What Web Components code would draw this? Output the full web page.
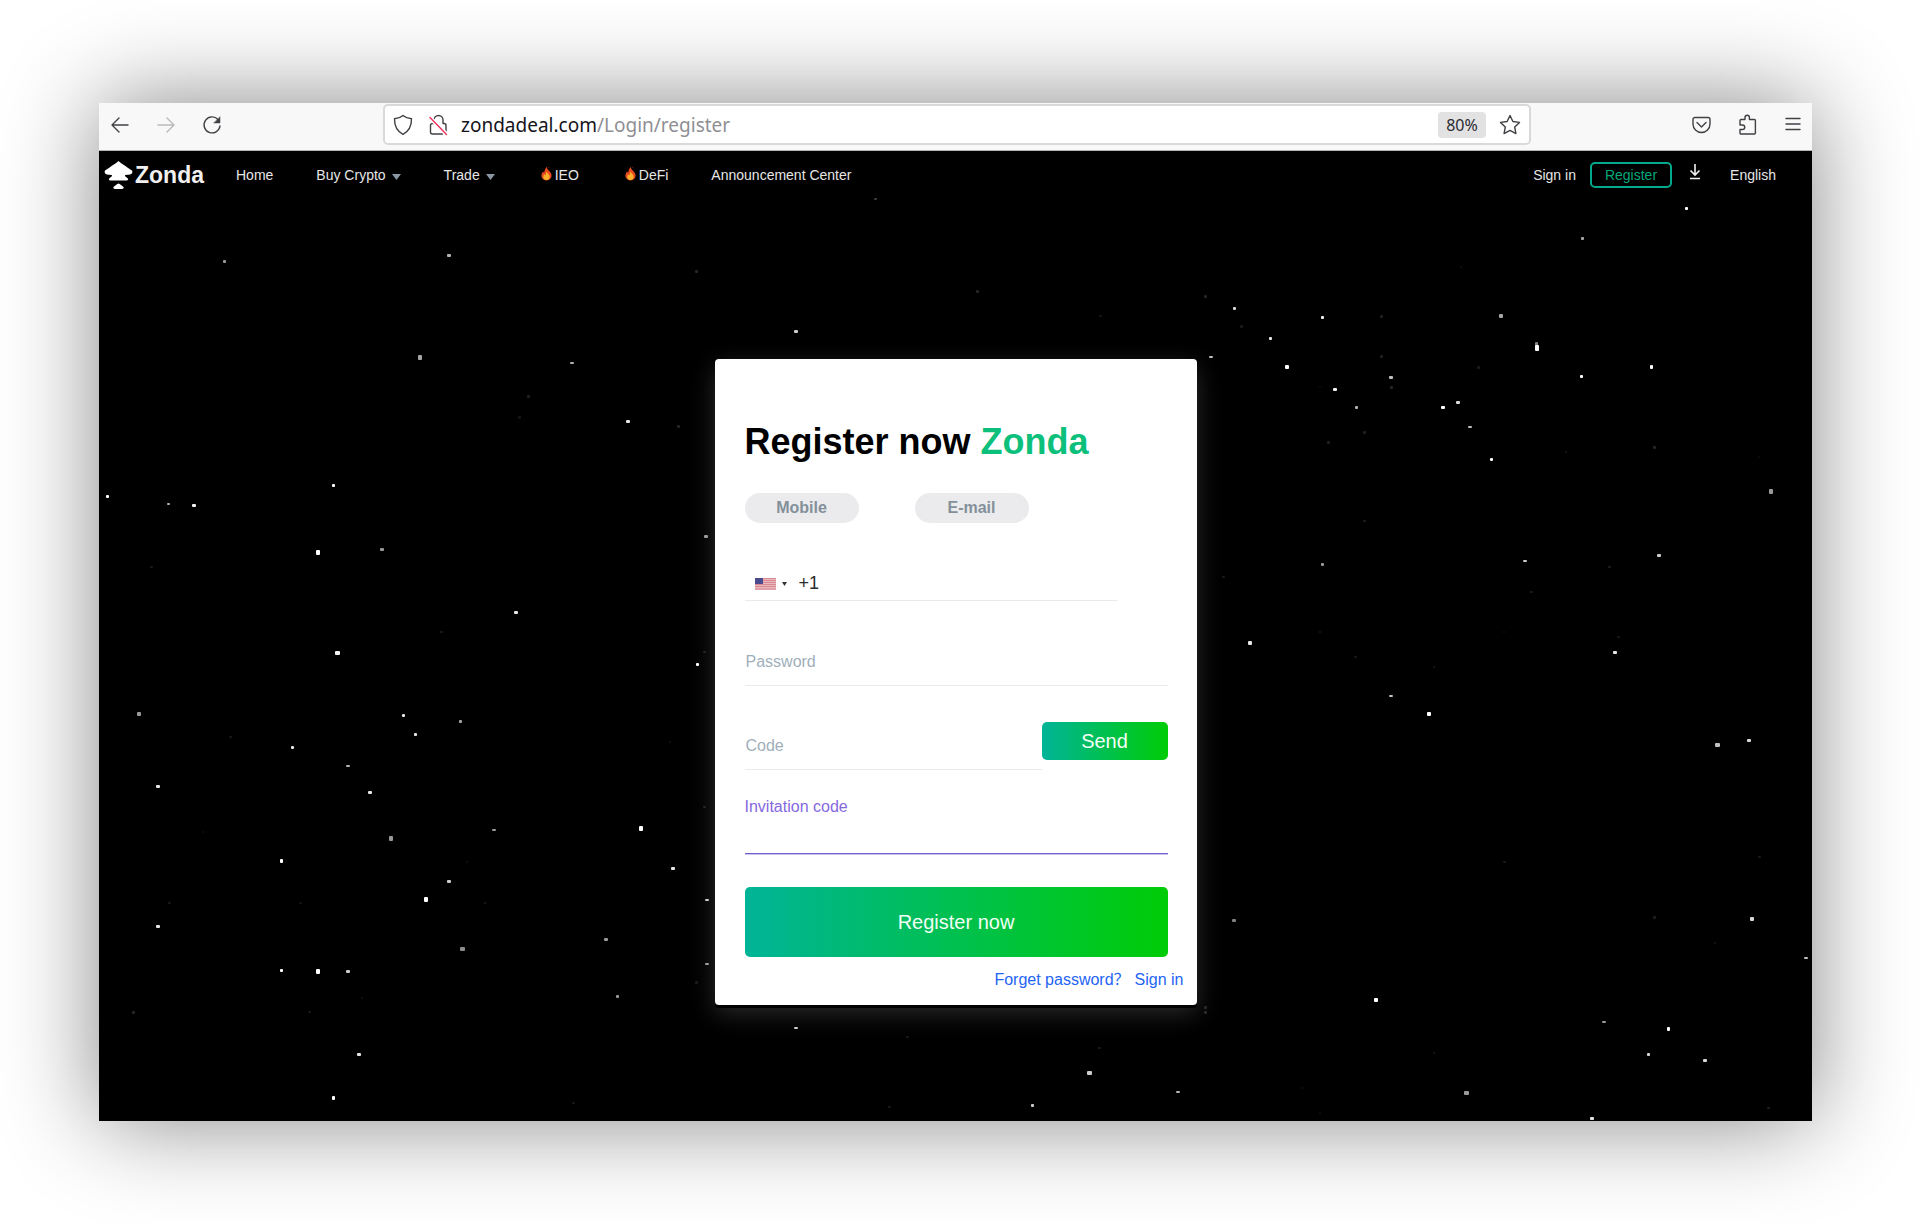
<!DOCTYPE html>
<html lang="en">
<head>
<meta charset="utf-8">
<meta name="viewport" content="width=device-width, initial-scale=1">
<title>Register now - Zonda</title>
<style>
    html, body {
        margin: 0;
        background: #fff;
    }

    body {
        box-sizing: border-box;
        min-height: 100vh;
        padding: 103px 112px 103px 99px;
        display: flex;
        font-family: "Liberation Sans", Arial, sans-serif;
        overflow-x: hidden;
    }
</style>
</head>
<body>

<browser-window>
    <browser-toolbar slot="toolbar" host="zondadeal.com" path="/Login/register" zoom="80%"></browser-toolbar>
    <site-nav></site-nav>
    <register-card></register-card>
</browser-window>

<template id="browser-window-template">
    <style>
        :host {
            flex: 1;
            min-width: 0;
            display: flex;
            flex-direction: column;
            box-shadow: 0 0 90px rgba(0,0,0,0.48);
        }

        .page {
            position: relative;
            flex: 1;
            display: flex;
            flex-direction: column;
            background: #000;
        }

        star-field {
            position: absolute;
            inset: 0;
        }
    </style>
    <slot name="toolbar"></slot>
    <main class="page">
        <star-field></star-field>
        <slot></slot>
    </main>
</template>

<template id="browser-toolbar-template">
    <style>
        :host {
            display: block;
            background: #f8f8f8;
            border-bottom: 1px solid #b4b4b4;
            font-family: "Noto Sans", "Open Sans", sans-serif;
        }

        .bar {
            display: flex;
            align-items: center;
            height: 43px;
            padding-bottom: 4px;
        }

        .group {
            display: flex;
            align-items: center;
            box-sizing: border-box;
        }

        .left {
            width: 284px;
            padding-left: 10px;
            gap: 24px;
        }

        .right {
            width: 281px;
            justify-content: flex-end;
            padding-right: 8px;
            gap: 24px;
        }

        button {
            display: flex;
            align-items: center;
            justify-content: center;
            border: none;
            background: none;
            padding: 0;
            width: 22px;
            height: 22px;
            color: #404045;
        }

        button:disabled {
            color: #b9b9b9;
        }

        svg {
            width: 22px;
            height: 22px;
            fill: none;
            stroke: currentColor;
            stroke-width: 1.4;
            stroke-linecap: round;
            stroke-linejoin: round;
        }

        .address {
            flex: 1;
            min-width: 0;
            display: flex;
            align-items: center;
            box-sizing: border-box;
            height: 41px;
            padding: 0 8px 0 7px;
            background: #fff;
            border: 2px solid #d9d9d9;
            border-radius: 5px;
        }

        .address button + button {
            margin-left: 13px;
        }

        .url {
            flex: 1;
            margin-left: 12px;
            outline: none;
            white-space: nowrap;
            font-size: 19px;
            line-height: 24px;
            color: #15141a;
        }

        .path {
            color: #8f8f94;
        }

        button.zoom {
            width: 48px;
            height: 26px;
            background: #e2e2e2;
            border-radius: 4px;
            font: 16px "Noto Sans", "Open Sans", sans-serif;
            color: #2b2a33;
        }
    </style>
    <div class="bar">
        <div class="group left">
            <button aria-label="Back"><svg viewBox="0 0 22 22"><path d="M19 11H3M10 4l-7 7 7 7"/></svg></button>
            <button aria-label="Forward" disabled><svg viewBox="0 0 22 22"><path d="M3 11h16M12 4l7 7-7 7"/></svg></button>
            <button aria-label="Reload"><svg viewBox="0 0 22 22"><path d="M17 5.500A8 8 0 1 0 19 12"/><path d="M19 3v6h-6z" fill="currentColor" stroke-width="0.5"/></svg></button>
        </div>
        <div class="address">
            <button aria-label="Tracking protection"><svg viewBox="0 0 22 22"><path d="M11 1.500c2.500 2.200 5.200 3 8.500 3.300C19.600 12 17.500 17 11 20.300 4.500 17 2.400 12 2.500 4.800 5.800 4.500 8.500 3.700 11 1.500z"/></svg></button>
            <button aria-label="Connection not secure"><svg viewBox="0 0 22 22"><path d="M7 9V6a4.500 4.500 0 0 1 9 0v3.500h1a2 2 0 0 1 2 2V17M15.500 20H5.500a2 2 0 0 1-2-2v-6.500a2 2 0 0 1 2-2H7"/><path d="M3 3.500l16.500 17" stroke="#fff" stroke-width="4"/><path d="M3 3.500l16.500 17" stroke="#f0305c"/></svg></button>
            <div class="url" role="textbox" aria-label="Address" contenteditable="true" spellcheck="false"><span class="host"></span><span class="path"></span></div>
            <button class="zoom"></button>
            <button aria-label="Bookmark"><svg viewBox="0 0 22 22"><path d="M11 1.500l2.900 6 6.600.9-4.800 4.600 1.200 6.600-5.900-3.200-5.900 3.200 1.200-6.600L1.500 8.400l6.600-.9z"/></svg></button>
        </div>
        <div class="group right">
            <button aria-label="Save to Pocket"><svg viewBox="0 0 22 22"><path d="M5 3.500h13a2 2 0 0 1 2 2V10a8.500 8.500 0 0 1-17 0V5.500a2 2 0 0 1 2-2z"/><path d="M7 8.500l4.500 4.500L16 8.500"/></svg></button>
            <button aria-label="Extensions"><svg viewBox="0 0 22 22"><path d="M4 8.500V7a1 1 0 0 1 1-1h4V4a2.200 2.200 0 0 1 4.400 0v2h5a1 1 0 0 1 1 1v12.500a1 1 0 0 1-1 1H5a1 1 0 0 1-1-1V16h2.500a2 2 0 0 0 0-4.500H4z" transform="translate(0 -0.500)"/></svg></button>
            <button aria-label="Menu"><svg viewBox="0 0 22 22"><path d="M4 4.500h14M4 10h14M4 15.500h14"/></svg></button>
        </div>
    </div>
</template>

<template id="site-nav-template">
    <style>
        :host {
            position: relative;
            display: flex;
            align-items: center;
            justify-content: space-between;
            height: 48px;
            padding: 0 36px 0 5px;
            font-size: 14px;
            line-height: 20px;
            color: #e6e6e6;
        }

        nav, .account {
            display: flex;
            align-items: center;
        }

        nav {
            gap: 43px;
        }

        a {
            display: flex;
            align-items: center;
            color: inherit;
            text-decoration: none;
            white-space: nowrap;
        }

        .brand {
            gap: 2px;
            margin-right: -11px;
            font-size: 23px;
            font-weight: bold;
            color: #f0f0f0;
        }

        .brand svg {
            width: 29px;
            height: 30px;
        }

        .caret {
            width: 9px;
            height: 6px;
            margin: 4px 0 0 6px;
        }

        .flame {
            width: 11px;
            height: 15px;
            margin: 0 3px 4px;
        }

        .register {
            box-sizing: border-box;
            height: 26px;
            margin: 0 17px 0 14px;
            padding: 0 13px;
            border: 2px solid #00a88c;
            border-radius: 5px;
            color: #00a87c;
        }

        .download {
            margin: 0 29px 6px 0;
        }
    </style>
    <nav>
        <a class="brand" href="#">
            <svg viewBox="0 0 29 30" fill="#fff"><path d="M14.500 1c2 2 7 5 13.500 9.500 1 1.500 0 3.500-2 4L21.500 15c-.8.300-.8 1 0 1.600l2.300 1.900c.8 1.200 0 2-1.300 2H6.500c-1.300 0-2.100-.8-1.300-2l2.300-1.900c.8-.6.8-1.300 0-1.600L3 14.500c-2-.5-3-2.500-2-4C7.500 6 12.500 3 14.500 1z"/><path d="M14.500 23.500c1.500.5 3.500 2 5 3.500.5 1-.3 2-1.500 2h-7c-1.200 0-2-1-1.500-2 1.500-1.500 3.500-3 5-3.500z"/></svg>
            <span>Zonda</span>
        </a>
        <a href="#">Home</a>
        <a href="#">Buy Crypto<svg class="caret" viewBox="0 0 9 6"><path d="M0 0h9L4.500 6z" fill="#8a96a3"/></svg></a>
        <a href="#">Trade<svg class="caret" viewBox="0 0 9 6"><path d="M0 0h9L4.500 6z" fill="#8a96a3"/></svg></a>
        <a href="#"><svg class="flame" viewBox="0 0 12 16"><path d="M6.500 1c0 2 .8 2.600 2.500 4.300 1.800 1.800 2.500 3.300 2.500 5C11.500 13.500 9.200 15.500 6 15.500S.5 13.500.5 10.300c0-2 .9-3.500 2-4.600.2.900.5 1.300 1 1.600C3.700 4.500 4.700 2.500 6.500 1z" fill="#ea4a1f"/><path d="M8.500.5l.8 1.200-1.100.2z" fill="#c8321a"/><path d="M6.300 6c.3 1.800 3.200 3 3.200 5.600 0 2.200-1.500 3.500-3.500 3.500s-3.500-1.200-3.500-3.200c0-1.300.5-2.200 1.200-2.900.3.700.7 1 1.200 1 .2-1.500.5-2.800 1.400-4z" fill="#fbb32c"/></svg>IEO</a>
        <a href="#"><svg class="flame" viewBox="0 0 12 16"><path d="M6.500 1c0 2 .8 2.600 2.500 4.300 1.800 1.800 2.500 3.300 2.500 5C11.500 13.500 9.200 15.500 6 15.500S.5 13.500.5 10.300c0-2 .9-3.500 2-4.600.2.900.5 1.300 1 1.600C3.700 4.500 4.700 2.500 6.500 1z" fill="#ea4a1f"/><path d="M8.500.5l.8 1.200-1.100.2z" fill="#c8321a"/><path d="M6.300 6c.3 1.800 3.200 3 3.200 5.600 0 2.200-1.500 3.500-3.500 3.500s-3.500-1.200-3.500-3.200c0-1.300.5-2.200 1.200-2.900.3.700.7 1 1.200 1 .2-1.500.5-2.800 1.400-4z" fill="#fbb32c"/></svg>DeFi</a>
        <a href="#">Announcement Center</a>
    </nav>
    <div class="account">
        <a href="#">Sign in</a>
        <a class="register" href="#">Register</a>
        <a class="download" href="#" aria-label="Download"><svg width="12" height="16" viewBox="0 0 12 16" fill="none" stroke="#f0f0f0" stroke-width="1.600"><path d="M6 0v11M1.500 6.500L6 11l4.500-4.500M1 14.500h10"/></svg></a>
        <a href="#">English</a>
    </div>
</template>

<template id="form-field-template">
    <style>
        :host {
            display: block;
            color: #2b2b2b;
        }

        .row {
            display: flex;
            align-items: center;
            box-sizing: border-box;
            height: 48px;
            border-bottom: 1px solid #e9eaec;
        }

        :host([compact]) .row {
            height: 34px;
        }

        input {
            flex: 1;
            min-width: 0;
            height: 100%;
            box-sizing: border-box;
            padding: 0 1px;
            border: none;
            outline: none;
            background: none;
            font: 16px "Liberation Sans", Arial, sans-serif;
            color: inherit;
        }

        :host([compact]) input {
            font-size: 18px;
        }

        input::placeholder {
            color: #a0afba;
            opacity: 1;
        }

        label {
            display: block;
            font-size: 16px;
            line-height: 20px;
            color: #8468e0;
        }

        label:empty {
            display: none;
        }

        :host([active]) .row {
            height: 37px;
            border-bottom: 1px solid #7260cc;
            box-shadow: 0 1px #c9c1ef;
        }
    </style>
    <label for="field"></label>
    <div class="row">
        <slot></slot>
        <input id="field">
    </div>
</template>

<template id="country-picker-template">
    <style>
        :host {
            position: relative;
            display: flex;
            align-items: center;
            gap: 6px;
            padding: 0 11px 0 10px;
        }

        select {
            position: absolute;
            inset: 0;
            opacity: 0;
        }
    </style>
    <svg width="21" height="12" viewBox="0 0 21 12">
        <rect width="21" height="12" fill="#e9b9be"/>
        <path d="M0 .5h21M0 2.500h21M0 4.500h21M0 6.500h21M0 8.500h21M0 11h21" stroke="#d98791"/>
        <rect width="8" height="6" fill="#4b4a8c"/>
    </svg>
    <svg width="5" height="4" viewBox="0 0 5 4"><path d="M0 0h5L2.500 4z" fill="#333"/></svg>
    <select aria-label="Country"><option value="us" aria-label="United States"></option></select>
</template>

<template id="gradient-button-template">
    <style>
        :host {
            display: block;
        }

        button {
            width: 100%;
            height: 100%;
            border: none;
            border-radius: 5px;
            padding: 0;
            background: linear-gradient(to right, #00b498, #00cc06);
            color: #f2fff5;
            font: 20px "Liberation Sans", Arial, sans-serif;
            cursor: pointer;
        }
    </style>
    <button><slot></slot></button>
</template>

<template id="register-card-template">
    <style>
        :host {
            position: relative;
            box-sizing: border-box;
            width: 482px;
            max-width: 100%;
            margin: 160px auto 116px;
            padding: 61px 29px 15px 30px;
            background: #fff;
            border-radius: 4px;
            box-shadow: 0 3px #000, 0 8px 24px rgba(255,255,255,0.17);
        }

        h1 {
            margin: 0;
            font-size: 36px;
            line-height: 44px;
            color: #000;
        }

        h1 span {
            color: #0cc07c;
        }

        .tabs {
            display: flex;
            gap: 56px;
            margin-top: 29px;
        }

        .tabs button {
            width: 114px;
            height: 30px;
            padding: 0;
            border: none;
            border-radius: 15px;
            background: #ebebed;
            color: #83909a;
            font: bold 16px "Liberation Sans", Arial, sans-serif;
        }

        .phone {
            margin: 44px 51px 37px 0;
        }

        .code {
            display: flex;
            align-items: flex-start;
            margin: 36px 0 27px;
        }

        .code form-field {
            flex: 1;
        }

        .send {
            width: 126px;
            height: 38px;
        }

        .submit {
            height: 70px;
            margin-top: 33px;
        }

        .links {
            display: flex;
            justify-content: flex-end;
            gap: 5px;
            margin: 13px -16px 0 0;
            font-family: "Liberation Sans", "Noto Sans CJK SC", sans-serif;
            font-size: 16px;
            line-height: 20px;
        }

        .links a {
            color: #2464f2;
            text-decoration: none;
        }
    </style>
    <h1>Register now <span>Zonda</span></h1>
    <div class="tabs">
        <button>Mobile</button>
        <button>E-mail</button>
    </div>
    <form-field class="phone" compact type="tel" name="Phone number" value="+1">
        <country-picker></country-picker>
    </form-field>
    <form-field type="password" placeholder="Password"></form-field>
    <div class="code">
        <form-field placeholder="Code"></form-field>
        <gradient-button class="send">Send</gradient-button>
    </div>
    <form-field active label="Invitation code"></form-field>
    <gradient-button class="submit">Register now</gradient-button>
    <div class="links">
        <a href="#">Forget password？</a>
        <a href="#">Sign in</a>
    </div>
</template>

<script>
    class TemplateElement extends HTMLElement {
        constructor() {
            super();
            const template = document.getElementById(this.localName + '-template');
            this.attachShadow({ mode: 'open' });
            this.shadowRoot.appendChild(template.content.cloneNode(true));
        }
    }

    class BrowserWindow extends TemplateElement {}
    class SiteNav extends TemplateElement {}
    class CountryPicker extends TemplateElement {}
    class GradientButton extends TemplateElement {}
    class RegisterCard extends TemplateElement {}

    class BrowserToolbar extends TemplateElement {
        connectedCallback() {
            const root = this.shadowRoot;
            root.querySelector('.host').textContent = this.getAttribute('host');
            root.querySelector('.path').textContent = this.getAttribute('path');
            root.querySelector('.zoom').textContent = this.getAttribute('zoom');
        }
    }

    class FormField extends TemplateElement {
        connectedCallback() {
            const input = this.shadowRoot.querySelector('input');
            const label = this.getAttribute('label') || '';
            this.shadowRoot.querySelector('label').textContent = label;

            input.type = this.getAttribute('type') || 'text';
            input.placeholder = this.getAttribute('placeholder') || '';
            input.value = this.getAttribute('value') || '';
            if (!label) {
                input.setAttribute('aria-label', this.getAttribute('name') || input.placeholder);
            }
        }
    }

    // x, y, width, height, opacity
    const STARS = [
        [125,110,3,3,.6], [350,104,4,3,.7], [597,120,3,3,.15], [321,206,4,5,.65], [473,212,4,2,.7],
        [429,245,3,3,.12], [420,266,3,3,.08], [529,270,4,3,.9], [579,275,3,3,.15], [234,334,3,3,1],
        [8,345,3,3,1], [69,353,3,2,.7], [95,354,4,3,.95], [219,401,4,5,1], [283,398,4,3,.6],
        [607,385,4,3,.6], [52,416,3,2,.1], [417,461,4,3,.9], [342,481,3,2,.1], [238,502,5,4,.95],
        [605,501,3,2,.12], [598,513,3,3,1], [40,563,4,4,.6], [304,564,3,3,.9], [361,570,3,3,.65],
        [316,583,3,3,.9], [131,586,3,2,.1], [193,596,3,3,.9], [571,591,2,2,.08], [249,615,4,2,.7],
        [59,635,4,3,.9], [271,641,4,3,.9], [104,681,2,2,.06], [395,679,4,2,.6], [605,656,3,2,.12],
        [542,677,4,5,1], [292,687,4,5,.6], [182,710,3,4,1], [368,711,2,2,.07], [574,717,4,3,.9],
        [350,730,4,3,.8], [327,748,4,5,1], [70,752,3,2,.1], [201,752,3,2,.07], [386,752,2,2,.12],
        [59,775,4,3,.9], [608,749,4,2,.8], [507,788,4,3,.6], [363,798,5,4,.55], [608,813,4,2,.6],
        [182,819,3,3,1], [219,820,4,5,1], [249,820,4,3,.8], [597,831,3,3,.1], [518,845,3,3,.6],
        [34,861,3,3,.15], [210,861,3,2,.1], [263,847,2,2,.07], [260,903,4,3,.9], [234,947,3,4,1],
        [474,952,3,2,.1], [776,48,3,2,.25], [878,140,3,3,.15], [1001,165,3,2,.08], [697,180,4,3,.8],
        [697,877,4,2,.8], [808,886,3,2,.1], [990,922,5,4,.8], [1079,941,4,2,.7], [933,954,3,3,.8],
        [1000,897,3,2,.1], [790,956,3,2,.1], [1587,57,3,3,1], [1483,87,3,3,.65], [1362,116,2,2,.06],
        [1106,145,3,3,.15], [1135,157,3,3,.85], [1142,175,3,3,.1], [1223,166,3,3,.95], [1282,165,3,3,.12],
        [1402,165,4,4,.65], [1171,187,3,3,.9], [1437,193,3,4,.5], [1438,197,4,6,1], [1112,206,4,2,.75],
        [1282,205,3,3,.12], [1188,216,4,4,1], [1379,216,3,3,.1], [1552,216,3,4,1], [1482,225,3,3,1],
        [1292,226,4,3,.75], [1292,236,3,3,.15], [1221,236,2,2,.06], [1236,238,4,3,.95], [1257,256,3,3,.7],
        [1344,256,4,3,1], [1359,251,4,3,.85], [1371,276,4,2,.75], [1265,281,3,3,.12], [1229,291,3,3,.12],
        [1392,308,3,3,1], [1467,301,2,2,.1], [1555,296,3,3,.15], [1660,306,2,2,.06], [1672,340,4,5,.6],
        [1265,370,3,2,.12], [1426,410,4,2,.8], [1223,413,3,3,.6], [1560,404,4,3,.8], [1510,416,3,2,.12],
        [1124,426,3,2,.1], [1432,441,3,2,.1], [1151,492,4,4,.9], [1221,481,2,2,.1], [1405,481,2,2,.06],
        [1519,486,3,2,.1], [1516,501,4,3,.9], [1256,506,3,2,.1], [1335,516,2,2,.1], [1292,545,4,2,.75],
        [1330,563,4,4,1], [1618,594,5,4,.75], [1650,589,4,3,.85], [1405,711,3,2,.1], [1660,706,3,2,.1],
        [1135,769,4,3,.5], [1555,766,3,3,.12], [1653,768,4,4,.85], [1616,792,2,2,.1], [1707,807,4,2,.75],
        [1277,849,4,4,1], [1106,856,3,3,.15], [1106,861,3,3,.15], [1505,871,4,2,.6], [1569,878,3,4,1],
        [1549,903,3,3,.85], [1606,909,4,3,.85], [1335,902,2,2,.1], [1203,937,2,2,.07], [1367,942,5,4,.6],
        [1493,967,4,3,.9], [1221,962,2,2,.06], [1669,957,3,2,.12]
    ];

    class StarField extends HTMLElement {
        constructor() {
            super();
            this.attachShadow({ mode: 'open' });
            const stars = STARS.map(([x, y, w, h, o]) =>
                `<rect x="${x - (w >> 1)}" y="${y - (h >> 1)}" width="${w}" height="${h}" rx="1" fill-opacity="${o}"/>`
            ).join('');
            this.shadowRoot.innerHTML = `
                <style>
                    :host { display: block; overflow: hidden; }
                    svg { display: block; width: 100%; height: 100%; }
                </style>
                <svg viewBox="0 0 1713 970" preserveAspectRatio="xMidYMid slice" fill="#fff" aria-hidden="true">${stars}</svg>`;
        }
    }

    customElements.define('star-field', StarField);
    customElements.define('browser-toolbar', BrowserToolbar);
    customElements.define('site-nav', SiteNav);
    customElements.define('country-picker', CountryPicker);
    customElements.define('form-field', FormField);
    customElements.define('gradient-button', GradientButton);
    customElements.define('register-card', RegisterCard);
    customElements.define('browser-window', BrowserWindow);
</script>
</body>
</html>
